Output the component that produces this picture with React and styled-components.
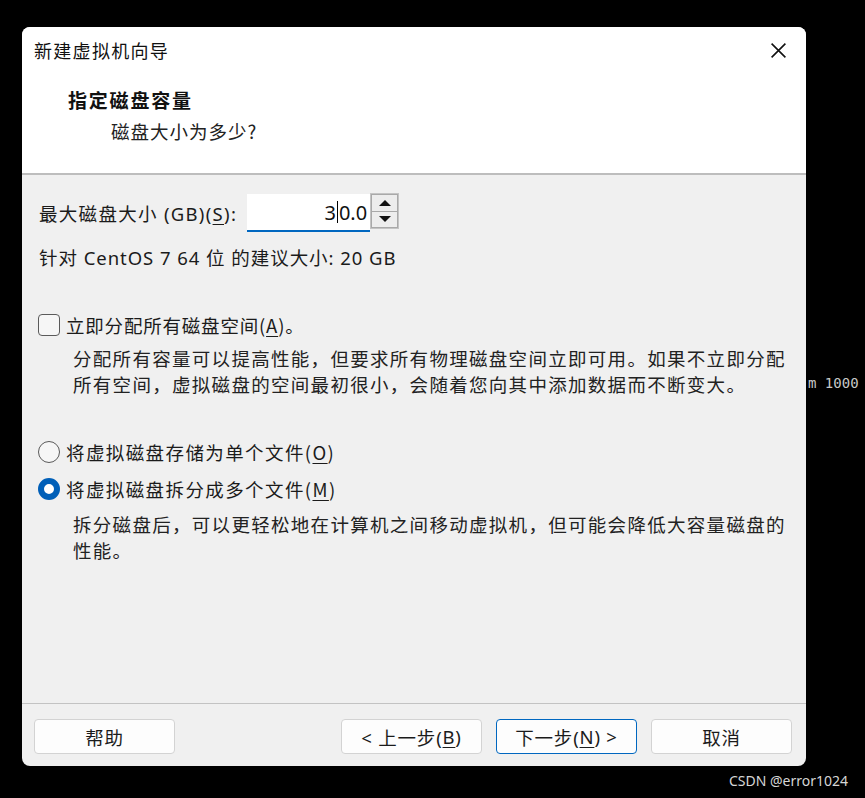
import React from "react";
import styled, { createGlobalStyle } from "styled-components";

const GlobalStyle = createGlobalStyle`
  html, body {
    margin: 0;
    padding: 0;
    background: #000;
  }
  body {
    font-family: "Noto Sans", "Noto Sans CJK SC", sans-serif;
    color: #1b1b1b;
  }
`;

const Page = styled.div`
  position: relative;
  width: 865px;
  height: 798px;
  background: #000;
  overflow: hidden;
  padding-top: 27px;
  box-sizing: border-box;
`;

const TerminalText = styled.div`
  position: absolute;
  left: 808px;
  top: 375px;
  font-family: "DejaVu Sans Mono", "Liberation Mono", monospace;
  font-size: 14px;
  color: #c8c8c8;
`;

const Dialog = styled.div`
  position: relative;
  margin-left: 22px;
  width: 784px;
  height: 739px;
  border-radius: 8px;
  overflow: hidden;
  background: #f0f0f0;
  display: flex;
  flex-direction: column;
`;

const Header = styled.div`
  height: 146px;
  background: #fff;
  display: flex;
  flex-direction: column;
`;

const TitleBar = styled.div`
  height: 46px;
  padding: 0 19px 0 12px;
  display: flex;
  align-items: center;
  justify-content: space-between;
  font-family: "Noto Sans CJK SC", sans-serif;
  font-size: 18px;
  letter-spacing: 1.3px;
  color: #111;
`;

const CloseIcon = styled.svg`
  width: 17px;
  height: 17px;
  display: block;
`;

const Heading = styled.div`
  margin: 14px 0 0 46px;
  line-height: 26px;
  font-family: "Noto Sans CJK SC", sans-serif;
  font-weight: 700;
  font-size: 19px;
  letter-spacing: 1.8px;
  color: #111;
`;

const SubHeading = styled.div`
  margin: 5px 0 0 89px;
  line-height: 26px;
  font-family: "Noto Sans CJK SC", sans-serif;
  font-size: 18.5px;
  letter-spacing: 1px;
  color: #222;
`;

const Separator = styled.div`
  height: ${(p) => p.$h || 1}px;
  background: ${(p) => p.$c || "#c6c6c6"};
  flex: none;
`;

const Body = styled.div`
  height: 528px;
  box-sizing: border-box;
  padding: 19px 0 0 16px;
  display: flex;
  flex-direction: column;
  font-size: 18.5px;
`;

const SizeRow = styled.div`
  display: flex;
  align-items: center;
  height: 38px;
  padding-left: 1px;
`;

const Label = styled.span`
  letter-spacing: 1.3px;
  margin-right: 10px;
`;

const U = styled.span`
  text-decoration: underline;
  text-underline-offset: 3px;
`;

const NumberBox = styled.div`
  width: 123px;
  height: 38px;
  box-sizing: border-box;
  background: #fff;
  border-bottom: 2px solid #0067c0;
  display: flex;
  align-items: center;
  justify-content: flex-end;
  padding-right: 3px;
  font-size: 20px;
  color: #111;
`;

const Caret = styled.span`
  display: inline-block;
  width: 1px;
  height: 22px;
  background: #000;
  margin: 0 1px;
`;

const Spinner = styled.div`
  width: 29px;
  height: 36px;
  box-sizing: border-box;
  border: 1px solid #c4c4c4;
  display: flex;
  flex-direction: column;
  align-self: flex-start;
  margin-top: -1px;
`;

const SpinButton = styled.div`
  flex: 1;
  background: #ededed;
  border: 1px solid #a9a9a9;
  display: flex;
  align-items: center;
  justify-content: center;
  &:first-child {
    border-bottom: none;
  }
`;

const Triangle = styled.span`
  width: 0;
  height: 0;
  border-left: 6px solid transparent;
  border-right: 6px solid transparent;
  ${(p) =>
    p.$up
      ? "border-bottom: 6px solid #111;"
      : "border-top: 6px solid #111;"}
`;

const Line = styled.div`
  line-height: 26px;
  margin-top: ${(p) => p.$mt || 0}px;
  padding-left: ${(p) => p.$pl || 0}px;
  letter-spacing: ${(p) => p.$ls || 0.6}px;
  white-space: nowrap;
`;

const OptionRow = styled.div`
  display: flex;
  align-items: center;
  gap: 6px;
  height: 26px;
  margin-top: ${(p) => p.$mt || 0}px;
  font-family: "Noto Sans CJK SC", sans-serif;
  letter-spacing: ${(p) => p.$ls || 0.8}px;
`;

const CheckBox = styled.span`
  width: 22px;
  height: 22px;
  box-sizing: border-box;
  border: 1px solid #5a5a5a;
  border-radius: 4px;
  background: #f6f6f6;
  flex: none;
`;

const Radio = styled.span`
  width: 22px;
  height: 22px;
  box-sizing: border-box;
  border-radius: 50%;
  flex: none;
  ${(p) =>
    p.$checked
      ? "background: #fff; border: 6px solid #005fb8;"
      : "background: #f6f6f6; border: 1px solid #5a5a5a;"}
`;

const Desc = styled.div`
  margin-top: ${(p) => p.$mt || 0}px;
  padding-left: 35px;
  line-height: 26px;
  font-family: "Noto Sans CJK SC", sans-serif;
  letter-spacing: 1.3px;
  color: #222;
  white-space: nowrap;
`;

const Footer = styled.div`
  flex: 1;
  display: flex;
  align-items: flex-start;
  padding: 15px 14px 0 12px;
  gap: 14px;
`;

const Button = styled.div`
  width: 141px;
  height: 35px;
  box-sizing: border-box;
  background: #fdfdfd;
  border: 1px solid ${(p) => (p.$primary ? "#0067c0" : "#d3d3d3")};
  border-radius: 4px;
  display: flex;
  align-items: center;
  justify-content: center;
  font-family: "Noto Sans", "Noto Sans CJK SC", sans-serif;
  font-size: 18.5px;
  letter-spacing: 0.8px;
  color: #1b1b1b;
`;

const Spacer = styled.div`
  flex: 1;
`;

const Watermark = styled.div`
  text-align: right;
  padding: 5px 17px 0 0;
  font-family: "Noto Sans", sans-serif;
  font-size: 14px;
  color: #d6d6d6;
`;

export default function App() {
  return (
    <>
      <GlobalStyle />
      <Page>
        <TerminalText>m 1000</TerminalText>
        <Dialog>
          <Header>
            <TitleBar>
              <span>新建虚拟机向导</span>
              <CloseIcon viewBox="0 0 16 16">
                <path d="M1.5 1.5 L14.5 14.5 M14.5 1.5 L1.5 14.5" stroke="#111" strokeWidth="1.5" fill="none" />
              </CloseIcon>
            </TitleBar>
            <Heading>指定磁盘容量</Heading>
            <SubHeading>磁盘大小为多少?</SubHeading>
          </Header>
          <Separator $h={2} $c="#bdbdbd" />
          <Body>
            <SizeRow>
              <Label>
                最大磁盘大小 (GB)(<U>S</U>):
              </Label>
              <NumberBox>
                3<Caret />0.0
              </NumberBox>
              <Spinner>
                <SpinButton>
                  <Triangle $up />
                </SpinButton>
                <SpinButton>
                  <Triangle />
                </SpinButton>
              </Spinner>
            </SizeRow>
            <Line $mt={13} $pl={1} $ls={0.95}>
              针对 CentOS 7 64 位 的建议大小: 20 GB
            </Line>
            <OptionRow $mt={41}>
              <CheckBox />
              <span>
                立即分配所有磁盘空间(<U>A</U>)。
              </span>
            </OptionRow>
            <Desc $mt={7}>
              分配所有容量可以提高性能，但要求所有物理磁盘空间立即可用。如果不立即分配
              <br />
              所有空间，虚拟磁盘的空间最初很小，会随着您向其中添加数据而不断变大。
            </Desc>
            <OptionRow $mt={42} $ls={1.4}>
              <Radio />
              <span>
                将虚拟磁盘存储为单个文件(<U>O</U>)
              </span>
            </OptionRow>
            <OptionRow $mt={11} $ls={1.4}>
              <Radio $checked />
              <span>
                将虚拟磁盘拆分成多个文件(<U>M</U>)
              </span>
            </OptionRow>
            <Desc $mt={9}>
              拆分磁盘后，可以更轻松地在计算机之间移动虚拟机，但可能会降低大容量磁盘的
              <br />
              性能。
            </Desc>
          </Body>
          <Separator $c="#c3c3c3" />
          <Footer>
            <Button>帮助</Button>
            <Spacer />
            <Button>
              &lt; 上一步(<U>B</U>)
            </Button>
            <Button $primary>
              下一步(<U>N</U>) &gt;
            </Button>
            <Button>取消</Button>
          </Footer>
        </Dialog>
        <Watermark>CSDN @error1024</Watermark>
      </Page>
    </>
  );
}
